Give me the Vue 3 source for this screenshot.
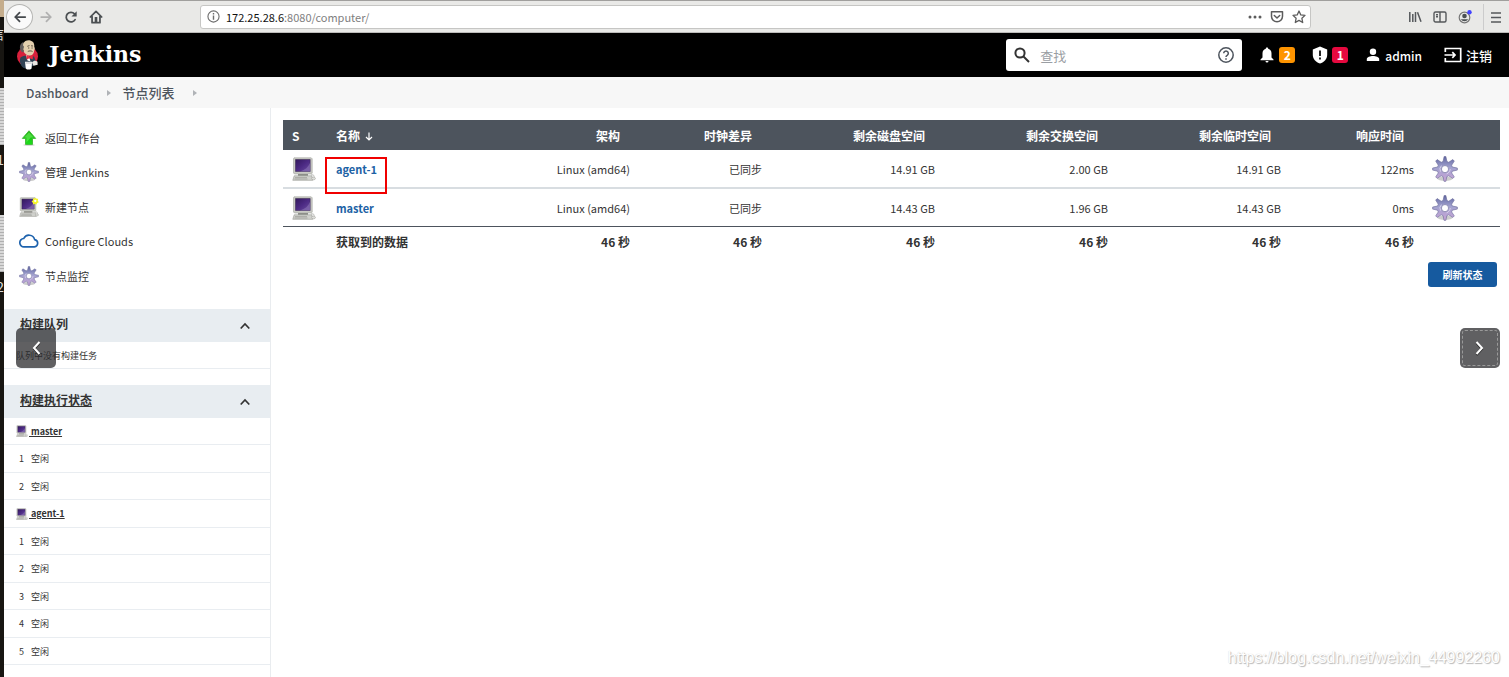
<script setup>
const tasks = [
  { icon: 'up', label: '返回工作台' },
  { icon: 'gear', label: '管理 Jenkins' },
  { icon: 'newpc', label: '新建节点' },
  { icon: 'cloud', label: 'Configure Clouds' },
  { icon: 'gear', label: '节点监控' },
]
const executors = [
  { name: 'master', count: 2 },
  { name: 'agent-1', count: 5 },
]
const columns = ['架构', '时钟差异', '剩余磁盘空间', '剩余交换空间', '剩余临时空间', '响应时间']
const nodes = [
  { name: 'agent-1', marked: true, cells: ['Linux (amd64)', '已同步', '14.91 GB', '2.00 GB', '14.91 GB', '122ms'] },
  { name: 'master', marked: false, cells: ['Linux (amd64)', '已同步', '14.43 GB', '1.96 GB', '14.43 GB', '0ms'] },
]
</script>

<template>
  <div class="screen">
    <svg width="0" height="0" class="defs" aria-hidden="true">
      <defs>
        <linearGradient id="gearFill" x1="0" y1="0" x2="0" y2="1">
          <stop offset="0" stop-color="#5f66a0" />
          <stop offset=".45" stop-color="#a3a3d0" />
          <stop offset="1" stop-color="#c9a4d6" />
        </linearGradient>
        <linearGradient id="crtFill" x1="0" y1="0" x2="1" y2="1">
          <stop offset="0" stop-color="#33185c" />
          <stop offset=".5" stop-color="#4c2a84" />
          <stop offset="1" stop-color="#6a4b9e" />
        </linearGradient>
        <linearGradient id="upFill" x1="0" y1="0" x2="0" y2="1">
          <stop offset="0" stop-color="#1fae14" />
          <stop offset="1" stop-color="#1be01b" />
        </linearGradient>
        <symbol id="gear" viewBox="0 0 24 24">
          <ellipse cx="12" cy="21" rx="7" ry="2" fill="#000" opacity=".2" />
          <path fill="url(#gearFill)" stroke="#6d6d9c" stroke-width=".6" stroke-linejoin="round" fill-rule="evenodd" d="M11.200.5h1.600l1 4.600 1.600.7 3.800-2.500 1.400 1.400-2.500 3.800.7 1.700 4.600.9v1.900l-4.600 1-.7 1.600 2.500 3.700-1.400 1.400-3.800-2.400-1.700.7-.9 4.400h-1.700l-.9-4.400-1.700-.7-3.700 2.400-1.400-1.400 2.400-3.700-.7-1.600-4.500-1v-1.900l4.500-.9.7-1.700-2.400-3.800 1.400-1.400 3.700 2.500 1.700-.7zM12 8.800a3.300 3.300 0 1 0 0 6.600 3.300 3.300 0 0 0 0-6.600z" />
          <path fill="none" stroke="#e2dcf0" stroke-width=".9" opacity=".8" d="M8 14.500a4.600 4.600 0 0 1 .7-5.600M13.500 16.500c2-.7 3-2.500 3.400-4.500" />
        </symbol>
        <symbol id="pc" viewBox="0 0 24 24">
          <path fill="#c9cac4" stroke="#a3a49e" stroke-width=".6" d="M2 .8h17.200l1 1v14.400l-1 .8H2.500l-1-1V1.800z" />
          <path fill="url(#crtFill)" stroke="#312047" stroke-width=".5" d="M3.500 2.500h14.700v12H3.500z" />
          <path fill="#8a73b5" opacity=".6" d="M18.200 5.500v9H8c5-1.500 8.500-4.500 10.200-9z" />
          <path fill="#8d8e89" d="M6 17h10v2H6z" />
          <path fill="#d0d1cd" stroke="#969791" stroke-width=".6" d="M2.200 18.800h17.600l1 4.500H.8z" />
          <path stroke="#9fa09b" stroke-width=".8" d="M3 20.600h12M2.500 22h13" />
          <path fill="none" stroke="#b5b6b1" d="M19 18c3-.6 3.500 1 2.800 2.500" />
          <ellipse cx="21.500" cy="21.500" rx="2" ry="1.300" fill="#dcddd9" stroke="#a0a09b" stroke-width=".5" />
        </symbol>
        <symbol id="newpc" viewBox="0 0 24 24">
          <use href="#pc" width="24" height="24" />
          <path fill="#f5f52b" d="M19.500.5l1.300 1.600 2.200.1-.4 2.200 1.200 1.800-1.900.9-.9 2-1.900-1-2 .9-.5-2.200-1.500-1.500 1.600-1.400.2-2.200 2 .2z" />
          <circle cx="19.500" cy="4.600" r="1.400" fill="#fff" />
        </symbol>
        <symbol id="up" viewBox="0 0 24 24">
          <ellipse cx="12" cy="20.300" rx="7" ry="1.300" fill="#000" opacity=".15" />
          <path fill="url(#upFill)" stroke="#37b52c" stroke-linejoin="round" d="M12 3.300l8 9.200h-3.800v7.200H7.800v-7.200H4z" />
          <path fill="#6cec5b" opacity=".6" d="M12 5l5.500 6.500H14l-5 6V11.500H6.500z" />
        </symbol>
        <symbol id="cloud" viewBox="0 0 24 24">
          <path fill="none" stroke="#1d62ad" stroke-width="2" d="M18.800 10.300A7 7 0 0 0 5.700 9 5 5 0 0 0 6.200 19H18.500a4.400 4.400 0 0 0 .3-8.700z" />
        </symbol>
      </defs>
    </svg>

    <div class="backdrop" aria-hidden="true"><i class="tan"></i><b>信</b><i class="thumb"></i><b>1</b><i class="thumb second"></i><b>2</b></div>

    <div class="browser">
      <div class="toolbar">
        <button class="nav back" aria-label="Back">
          <svg width="16" height="16" viewBox="0 0 16 16"><path fill="none" stroke="#45494d" stroke-width="2" stroke-linecap="round" stroke-linejoin="round" d="M14 8H2.500M7.500 3l-5 5 5 5" /></svg>
        </button>
        <button class="nav" aria-label="Forward">
          <svg width="16" height="16" viewBox="0 0 16 16"><path fill="none" stroke="#b0b0b0" stroke-width="2" stroke-linecap="round" stroke-linejoin="round" d="M2.500 8h11M8.500 3l5 5-5 5" /></svg>
        </button>
        <button class="nav" aria-label="Reload">
          <svg width="16" height="16" viewBox="0 0 16 16"><path fill="none" stroke="#4b4f52" stroke-width="2" stroke-linecap="round" d="M12.700 11A5.500 5.500 0 1 1 12 4.300" /><path fill="#4b4f52" d="M14.500 1.500V7.500H8.500z" /></svg>
        </button>
        <button class="nav" aria-label="Home">
          <svg width="16" height="16" viewBox="0 0 16 16"><path fill="none" stroke="#4b4f52" stroke-width="2" stroke-linecap="round" stroke-linejoin="round" d="M1.500 8L8 1.500 14.500 8M3.500 7.500v7h9v-7" /><path fill="#4b4f52" d="M6.500 8h3v6h-3z" /></svg>
        </button>
        <div class="address">
          <svg width="13" height="13" viewBox="0 0 14 14"><circle cx="7" cy="7" r="6" fill="none" stroke="#6c6c6c" stroke-width="1.200" /><path stroke="#6c6c6c" stroke-width="1.500" d="M7 6v4.500M7 3.300v1.500" /></svg>
          <span class="url"><strong>172.25.28.6</strong>:8080/computer/</span>
          <svg width="14" height="14" viewBox="0 0 14 14" fill="#5c5c5c"><circle cx="2" cy="7" r="1.500" /><circle cx="7" cy="7" r="1.500" /><circle cx="12" cy="7" r="1.500" /></svg>
          <svg width="14" height="14" viewBox="0 0 14 14" fill="none" stroke="#5c5c5c" stroke-width="1.500" stroke-linecap="round" stroke-linejoin="round"><path d="M1.500 1.700h11v4.600a5.500 5.500 0 0 1-11 0zM4.300 5.500L7 8l2.700-2.500" /></svg>
          <svg width="14" height="14" viewBox="0 0 14 14" fill="none" stroke="#5c5c5c" stroke-width="1.300" stroke-linejoin="round"><path d="M7 1l1.800 3.900 4.200.5-3.100 2.900.8 4.200L7 10.400l-3.700 2.100.8-4.200L1 5.400l4.200-.5z" /></svg>
        </div>
        <div class="tools">
          <button class="tool" aria-label="Library"><svg width="14" height="14" viewBox="0 0 14 14" stroke="#55585b" stroke-width="1.500"><path d="M1.800 2v10M4.800 4v8M7.500 2v10M9.500 2.300l3.500 9.500" /></svg></button>
          <button class="tool" aria-label="Sidebar"><svg width="14" height="14" viewBox="0 0 14 14" fill="none" stroke="#55585b" stroke-width="1.400"><rect x="1" y="2" width="12" height="10" rx="1.500" /><path d="M7 2v10M3 4.700h2M3 6.800h2" /></svg></button>
          <button class="tool" aria-label="Account"><svg width="14" height="14" viewBox="0 0 14 14"><circle cx="6.500" cy="7.500" r="5.300" fill="none" stroke="#777" stroke-width="1.200" /><circle cx="6.500" cy="6" r="2.300" fill="#4b4f52" /><path fill="#4b4f52" d="M2.800 9.300h7.400a4.500 4.500 0 0 1-7.400 0z" /><circle cx="11.500" cy="2.300" r="2.200" fill="#4343ff" /></svg></button>
          <button class="tool menu" aria-label="Menu"><svg width="14" height="14" viewBox="0 0 14 14" stroke="#55585b" stroke-width="1.500"><path d="M2 3h10M2 7.500h10M2 12h10" /></svg></button>
        </div>
      </div>

      <header class="header">
        <a href="#" class="brand">
          <svg width="24" height="32" viewBox="0 0 24 32">
            <ellipse cx="11.500" cy="17.500" rx="10.500" ry="9.800" fill="#d8203c" />
            <path fill="#2f4254" d="M4.500 18.500c2-1.500 4.500-2 7-1.500l6.500.5 2 5-1.500 4-9 3c-2.500-.5-4-2-5-4.500-.8-2.200-.8-4.500 0-6.500z" />
            <path fill="#e3cfae" d="M7 4.500c1.500-2.500 4.500-3.800 7.300-3 3.200.8 4.200 3.300 4 6.500.8 1.200.6 2.200 0 3.200-.2 3-1.800 5.300-4.300 5.300-3.300 0-6-2.200-6.700-5.300C5.500 9 5.700 6.500 7 4.500z" />
            <path fill="#625d5c" d="M7.500 3C4.500 4.200 3.300 7.500 4.300 10.500c.4 1.500 1.300 2.500 2.700 3l1-1.500-.7-1.700.7-2.500-1-1.500z" />
            <path fill="none" stroke="#54483c" stroke-width=".9" d="M11.300 7.300l2.200-.7M15 6.800l2 .2M12 9h1.300M15.500 9h1.200M11.800 12.500c1.300-.8 3.300-.8 4.700 0" />
            <path fill="#fff" d="M10 16l3 1.500 1.500 5-3-1z" />
            <path fill="#f02a3f" d="M10.500 16.300l3 1.300 3.300-1.300v4l-3.300-1-3 1.200z" />
            <path fill="#fff" d="M9 22.800h7l-.4 6.700-1.500 1H11l-1.200-1z" />
            <path fill="#e9e6e2" d="M16 23.500c1.500-2 3.700-2.500 5.500-.8l.2 3-4.200 1z" />
            <path fill="none" stroke="#a7a8ad" stroke-width=".8" d="M9.500 24h6" />
          </svg>
          <span>Jenkins</span>
        </a>
        <label class="search">
          <svg width="18" height="18" viewBox="0 0 18 18" fill="none" stroke="#333" stroke-width="2"><circle cx="7" cy="7" r="4.600" /><path d="M10.500 10.500l5.500 5.500" /></svg>
          <input type="text" placeholder="查找" aria-label="查找" />
          <svg width="18" height="18" viewBox="0 0 18 18" fill="none" stroke="#4d545d" stroke-width="1.500"><circle cx="9" cy="9" r="7.200" /><path d="M6.700 7.300a2.300 2.300 0 1 1 3.500 2c-.8.500-1.200.8-1.200 1.700M9 12.200v1.500" /></svg>
        </label>
        <a href="#" class="action bell" aria-label="2">
          <svg width="14" height="16" viewBox="0 0 14 16" fill="#fff"><path d="M7 .5c.8 0 1.200.5 1.200 1.200C10.500 2.300 11.500 4 11.500 6.500v4L13.500 12.500v.8H.5v-.8L2.500 10.500v-4C2.500 4 3.500 2.300 5.800 1.700 5.800 1 6.200.5 7 .5zM5.500 14h3a1.500 1.500 0 0 1-3 0z" /></svg>
          <span class="badge orange">2</span>
        </a>
        <a href="#" class="action shield" aria-label="1">
          <svg width="16" height="18" viewBox="0 0 16 18"><path fill="#fff" d="M8 .5l7.200 3v5.300c0 4-3 7.500-7.200 8.700C3.800 16.300.8 12.800.8 8.800V3.500z" /><path stroke="#000" stroke-width="1.700" d="M8 4.500v5.500M8 11.500v2" /></svg>
          <span class="badge red">1</span>
        </a>
        <a href="#" class="action user">
          <svg width="14" height="14" viewBox="0 0 14 14" fill="#fff"><circle cx="7" cy="3.700" r="3.200" /><path d="M.8 13v-2c0-2 3.500-3 6.200-3s6.200 1 6.200 3v2z" /></svg>
          <span>admin</span>
        </a>
        <a href="#" class="action logout">
          <svg width="18" height="16" viewBox="0 0 18 16" fill="none" stroke="#fff" stroke-width="1.700"><path d="M1.300 5V1.500h15.400v13H1.300V11M.5 8h10.500M8.300 5.200L11 8l-2.700 2.800" /></svg>
          <span>注销</span>
        </a>
      </header>

      <nav class="crumbs">
        <a href="#" class="home">Dashboard</a><i class="sep"></i><a href="#">节点列表</a><i class="sep"></i>
      </nav>

      <div class="body">
        <aside class="side">
          <nav class="tasks">
            <a v-for="t in tasks" :key="t.label" href="#" class="task">
              <svg width="20" height="20"><use :href="'#' + t.icon" width="20" height="20" /></svg>
              <span>{{ t.label }}</span>
            </a>
          </nav>
          <section class="pane">
            <div class="pane-head">
              <span>构建队列</span>
              <button aria-label="收起构建队列"><svg width="12" height="12" viewBox="0 0 12 12" fill="none" stroke="#333" stroke-width="1.700"><path d="M1.700 8.500L6 4l4.300 4.500" /></svg></button>
            </div>
            <div class="pane-row queue">队列中没有构建任务</div>
          </section>
          <section class="pane">
            <div class="pane-head">
              <a href="#">构建执行状态</a>
              <button aria-label="收起构建执行状态"><svg width="12" height="12" viewBox="0 0 12 12" fill="none" stroke="#333" stroke-width="1.700"><path d="M1.700 8.500L6 4l4.300 4.500" /></svg></button>
            </div>
            <template v-for="e in executors" :key="e.name">
              <div class="pane-row host">
                <svg width="12" height="12"><use href="#pc" width="12" height="12" /></svg>
                <a href="#">&nbsp;{{ e.name }}</a>
              </div>
              <div v-for="n in e.count" :key="n" class="pane-row slot"><span>{{ n }}</span><span>空闲</span></div>
            </template>
          </section>
        </aside>

        <main class="main">
          <table>
            <colgroup>
              <col class="c-s" /><col class="c-name" /><col class="c-arch" /><col class="c-clock" /><col class="c-space" /><col class="c-space" /><col class="c-space" /><col class="c-time" /><col class="c-conf" />
            </colgroup>
            <thead>
              <tr>
                <th class="left">S</th>
                <th class="left">名称 <svg class="arrow" width="8" height="9" viewBox="0 0 8 9" fill="none" stroke="#fff" stroke-width="1.200"><path d="M4 .5v7M1 5l3 3 3-3" /></svg></th>
                <th v-for="c in columns" :key="c"><span>{{ c }}</span></th>
                <th></th>
              </tr>
            </thead>
            <tbody>
              <tr v-for="n in nodes" :key="n.name">
                <td class="left icon"><svg width="24" height="26"><use href="#pc" width="24" height="26" /></svg></td>
                <td class="left name"><a href="#">{{ n.name }}</a><i v-if="n.marked" class="mark"></i></td>
                <td v-for="(c, i) in n.cells" :key="i">{{ c }}</td>
                <td class="left conf"><button :aria-label="'配置 ' + n.name"><svg width="26" height="26"><use href="#gear" width="26" height="26" /></svg></button></td>
              </tr>
            </tbody>
            <tfoot>
              <tr>
                <td></td>
                <td class="left">获取到的数据</td>
                <td v-for="c in columns" :key="c">46 秒</td>
                <td></td>
              </tr>
            </tfoot>
          </table>
          <div class="refresh"><button>刷新状态</button></div>
        </main>
      </div>
    </div>

    <button class="pager prev" aria-label="Previous"><svg width="12" height="16" viewBox="0 0 12 16" fill="none"><path stroke="#222" stroke-width="2" d="M9.500 3L4 9l5.500 6" /><path stroke="#fff" stroke-width="2" d="M9.500 2L4 8l5.500 6" /></svg></button>
    <button class="pager next" aria-label="Next"><svg width="12" height="16" viewBox="0 0 12 16" fill="none"><path stroke="#222" stroke-width="2" d="M2.500 3L8 9l-5.500 6" /><path stroke="#fff" stroke-width="2" d="M2.500 2L8 8l-5.500 6" /></svg></button>
    <span class="watermark">https://blog.csdn.net/weixin_44992260</span>
  </div>
</template>

<style>
body { margin: 0; overflow: hidden; }
</style>

<style scoped>
.screen { position: relative; display: flex; height: 100vh; overflow: hidden; background: #fff; color: #333; font-family: "Noto Sans CJK SC", sans-serif; font-size: 11px; }
.defs { position: absolute; }
a { color: inherit; text-decoration: none; }
button { font: inherit; color: inherit; border: 0; padding: 0; background: none; }
svg { display: block; flex: none; }

.backdrop { width: 4px; flex: none; overflow: hidden; background: #181612; color: #ddd; display: flex; flex-direction: column; align-items: flex-end; }
.backdrop i { width: 4px; flex: none; }
.backdrop b { font-size: 14px; line-height: 16px; font-weight: 400; }
.tan { height: 17px; margin-bottom: 8px; background: #c5ad8c; }
.thumb { height: 57px; margin: 47px 0 6px; background: repeating-linear-gradient(#d8d8d8 0 2px, #b0b0b0 2px 3px); }
.thumb.second { margin: 48px 0 6px; }

.browser { flex: 1; min-width: 0; display: flex; flex-direction: column; }
.toolbar { height: 33px; box-sizing: border-box; display: flex; align-items: center; background: #e9e9e7; border-top: 1px solid #a09f9d; border-bottom: 1px solid #bcbbb9; padding: 0 6px 0 2px; }
.nav { width: 25px; height: 26px; display: grid; place-items: center; }
.nav svg { width: 14px; height: 14px; }
.back { width: 27px; box-sizing: border-box; border: 1px solid #b5b5b3; border-radius: 50%; background: #fafafa; }
.address { flex: 1; height: 24px; box-sizing: border-box; margin-left: 92px; padding: 0 4px 0 6px; display: flex; align-items: center; gap: 8px; background: #fff; border: 1px solid #c6c6c4; border-radius: 3px; }
.address svg:first-child { margin-right: -2px; }
.url { flex: 1; font-size: 11px; color: #808080; }
.url strong { color: #111; font-weight: 400; }
.tools { width: 192px; display: flex; justify-content: flex-end; gap: 11px; }
.tool { width: 14px; height: 26px; display: grid; place-items: center; }
.menu { width: 20px; padding-left: 5px; border-left: 1px solid #ccc; }

.header { height: 44px; display: flex; align-items: center; background: #000; color: #fff; padding: 0 17px 0 12px; font-size: 13px; font-weight: 500; }
.brand { flex: 1; display: flex; align-items: center; gap: 9px; font-family: "DejaVu Serif", serif; font-weight: 700; font-size: 22px; line-height: 30px; }
.brand span { padding-bottom: 2px; }
.search { width: 236px; height: 32px; box-sizing: border-box; display: flex; align-items: center; padding: 0 7px; background: #fff; border-radius: 3px; }
.search input { flex: 1; min-width: 0; margin: 0 9px; padding: 0; border: 0; outline: 0; background: none; font: inherit; font-weight: 400; color: #333; }
.search input::placeholder { color: #9a9ea3; opacity: 1; }
.action { display: flex; align-items: center; gap: 5px; }
.bell { margin-left: 18px; }
.shield { margin-left: 17px; }
.shield .badge { margin-left: -1px; }
.user { margin-left: 18px; font-size: 12px; }
.logout { margin-left: 22px; gap: 4px; }
.badge { width: 16px; height: 16px; line-height: 16px; text-align: center; border-radius: 3px; font-size: 12px; font-weight: 700; }
.orange { background: #fe9400; }
.red { background: #e6093f; }

.crumbs { height: 31px; display: flex; align-items: center; padding-left: 22px; background: #f7f7f7; color: #4d545d; font-size: 13px; font-weight: 500; }
.home { font-size: 12px; }
.sep { margin: 0 12px 0 18px; border: 3px solid transparent; border-left: 4px solid #b0b3b7; border-right: 0; }

.body { flex: 1; display: flex; min-height: 0; }
.side { width: 266px; flex: none; border-right: 1px solid #e9ecef; }
.tasks { padding: 12px 0 16px 15px; }
.task { height: 35px; display: flex; align-items: center; gap: 6px; }
.task:nth-child(even) { height: 34px; }
.pane { margin-bottom: 16px; }
.pane-head { height: 33px; box-sizing: border-box; padding: 0 19px 4px 16px; display: flex; align-items: center; justify-content: space-between; background: #e8edf1; font-size: 12px; font-weight: 700; }
.pane-head a, .host a { text-decoration: underline; }
.pane-head button { padding-top: 4px; }
.pane-row { height: 28px; box-sizing: border-box; padding-left: 12px; display: flex; align-items: center; border-bottom: 1px solid #e9edf1; font-size: 9px; }
.pane-row:nth-child(even) { height: 27px; }
.host { font-weight: 700; gap: 1px; }
.slot { padding-left: 15px; gap: 7px; }

.main { flex: 1; min-width: 0; padding: 12px 9px 0 12px; }
table { width: 100%; table-layout: fixed; border-collapse: collapse; }
.c-s { width: 44px; }
.c-arch { width: 132px; }
.c-clock { width: 132px; }
.c-space { width: 173px; }
.c-time { width: 133px; }
.c-conf { width: 86px; }
th, td { height: 37px; padding: 0 0 0 9px; text-align: right; white-space: nowrap; }
th { height: 30px; padding-right: 10px; background: #4d545d; color: #fff; font-size: 12px; font-weight: 700; }
.left { text-align: left; }
.arrow { display: inline-block; margin-left: 2px; }
tbody tr { border-bottom: 1px solid #4d545d; }
tbody tr:first-child { border-bottom: 2px solid #d8dde1; }
.name { position: relative; color: #1d62a5; font-weight: 700; }
.mark { position: absolute; left: -2px; top: 7px; width: 58px; height: 33px; border: 2px solid #f00000; }
.conf { padding-left: 18px; }
.conf button { display: block; }
tfoot td { height: 28px; font-size: 12px; font-weight: 700; }
.refresh { display: flex; justify-content: flex-end; padding: 7px 3px; }
.refresh button { width: 69px; height: 25px; border-radius: 3px; background: #165a9f; color: #fff; font-size: 10px; font-weight: 700; }

.pager { position: absolute; top: 328px; width: 40px; height: 40px; display: grid; place-items: center; border-radius: 5px; background: rgba(40, 41, 43, .74); }
.prev { left: 16px; }
.next { right: 9px; outline: 1px dashed #999; outline-offset: -3px; }
.watermark { position: absolute; right: 9px; bottom: 9px; font: 16px/20px "Liberation Sans", sans-serif; color: #fff; text-shadow: 1px 1px 1px #b8b8b8, 0 0 1px #ccc; }
</style>
